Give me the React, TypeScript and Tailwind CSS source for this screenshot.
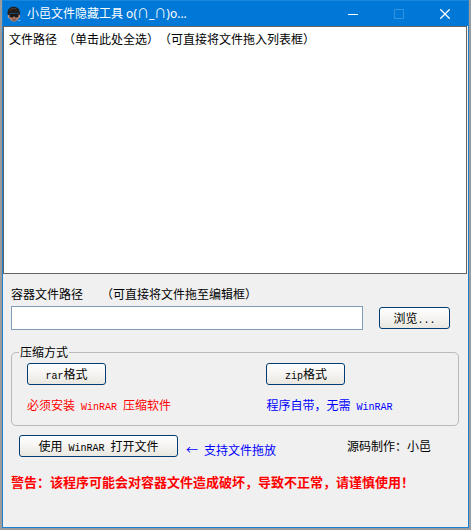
import type { ButtonHTMLAttributes, ReactNode } from 'react';
import clsx from 'clsx';

// Latin letters and spaces take half the width of a Chinese character
function Half({ children }: { children: ReactNode }) {
  return (
    <span className="whitespace-pre font-['Liberation_Mono',monospace] text-[10px] leading-none">
      {children}
    </span>
  );
}

function XpButton({ className, ...props }: ButtonHTMLAttributes<HTMLButtonElement>) {
  return (
    <button
      type="button"
      className={clsx(
        'h-[22px] rounded-[3px] border border-[#003c74] bg-linear-to-b from-white via-[#f5f4f1] to-[#e9e7df] text-center whitespace-nowrap',
        className,
      )}
      {...props}
    />
  );
}

function AppIcon() {
  return (
    <svg viewBox="0 0 14 16" className="h-4 w-3.5" aria-hidden="true">
      <path d="M1.500 8h11v3l-2 3-2 1.500h-3L3.500 14l-2-3z" fill="#b58573" />
      <path d="M4.500 12.500h5L8.500 15h-3z" fill="#8a5d4e" />
      <path d="M.8 9C-.2 4.500 2 .8 6.500.8S13.500 3.500 12.800 9H12l-1-1.500H3L1.800 9z" fill="#231e1c" />
      <path d="M2.500 5C3.500 2.500 6 1.800 9.500 2.800" stroke="#4a403b" fill="none" />
      <path d="M2.500 8h9v2.500l-1 1H8L7 10l-1 1.500H3.500l-1-1z" fill="#1c1615" />
      <path d="M.8 9v2.200l1.200 1V9.500zM13 9v2.200l-1.200 1V9.500z" fill="#c79a86" />
      <path d="M11 14.500h2.500" stroke="#6db0e8" />
    </svg>
  );
}

function TitleBar() {
  return (
    <header className="flex h-[26px] items-center border-t border-[#1a86db] bg-[#0078d7] pl-1 text-white">
      <AppIcon />
      <h1 className="ml-1.5 flex-1 font-['Noto_Sans','Noto_Sans_CJK_SC',sans-serif] text-[12px] whitespace-nowrap">
        小邑文件隐藏工具 o(∩_∩)o...
      </h1>
      <button type="button" aria-label="最小化" className="flex w-[46px] justify-center">
        <svg viewBox="0 0 10 10" className="size-2.5">
          <path d="M0 5.500h10" stroke="currentColor" />
        </svg>
      </button>
      <button type="button" aria-label="最大化" disabled className="flex w-[46px] justify-center">
        <svg viewBox="0 0 10 10" className="size-2.5">
          <path d="M.5.5h9v9h-9z" stroke="#3393df" fill="none" />
        </svg>
      </button>
      <button type="button" aria-label="关闭" className="flex w-[46px] justify-center">
        <svg viewBox="0 0 10 10" className="size-2.5">
          <path d="M.3.3l9.400 9.400M9.700.3L.3 9.700" stroke="currentColor" strokeWidth="1.300" />
        </svg>
      </button>
    </header>
  );
}

export default function App() {
  return (
    <div className="flex min-h-screen flex-col bg-[#9c9c9c] px-0.5 pb-0.5 font-['Noto_Sans_CJK_SC',sans-serif] text-[12px] leading-4 text-black [text-spacing-trim:space-all]">
      <div className="flex flex-1 flex-col border border-t-0 border-[#1a80d2] bg-[#f0f0f0]">
        <TitleBar />

        <section className="mr-px flex-1 border border-[#646464] bg-white px-[5px] py-1">
          <button type="button" className="whitespace-nowrap">
            文件路径<Half> </Half>（单击此处全选）（可直接将文件拖入列表框）
          </button>
        </section>

        <main className="pt-3 pr-[9px] pl-2">
          <label htmlFor="container" className="block whitespace-nowrap">
            容器文件路径<Half>{'   '}</Half>（可直接将文件拖至编辑框）
          </label>
          <div className="mt-1 flex items-center gap-4 pr-[9px]">
            <input
              id="container"
              type="text"
              className="h-6 min-w-0 flex-1 border border-[#7f9db9] bg-white px-1 outline-none"
            />
            <XpButton className="w-[71px]">
              浏览<Half>...</Half>
            </XpButton>
          </div>

          <fieldset className="mt-3.5 rounded-[5px] border border-[#bdb8bd] pb-3 pl-[7px]">
            <legend className="px-px">压缩方式</legend>
            <div className="grid grid-cols-[5fr_4fr] pt-[3px] pl-2">
              <div>
                <XpButton className="w-[79px]">
                  <Half>rar</Half>格式
                </XpButton>
                <p className="mt-3 whitespace-nowrap text-[#ff0000]">
                  必须安装<Half> WinRAR </Half>压缩软件
                </p>
              </div>
              <div>
                <XpButton className="w-[79px]">
                  <Half>zip</Half>格式
                </XpButton>
                <p className="mt-3 whitespace-nowrap text-[#0000ff]">
                  程序自带，无需<Half> WinRAR</Half>
                </p>
              </div>
            </div>
          </fieldset>

          <div className="mt-2 flex items-center pr-7 pl-2 whitespace-nowrap">
            <XpButton className="w-[159px]">
              使用<Half> WinRAR </Half>打开文件
            </XpButton>
            <p className="ml-2 pt-2 text-[#0000ff]">
              ←<Half> </Half>支持文件拖放
            </p>
            <p className="ml-auto">源码制作：小邑</p>
          </div>

          <p className="mt-4 pb-[37px] text-[13px] font-bold whitespace-nowrap text-[#ff0000]">
            警告：该程序可能会对容器文件造成破坏，导致不正常，请谨慎使用！
          </p>
        </main>
      </div>
    </div>
  );
}
